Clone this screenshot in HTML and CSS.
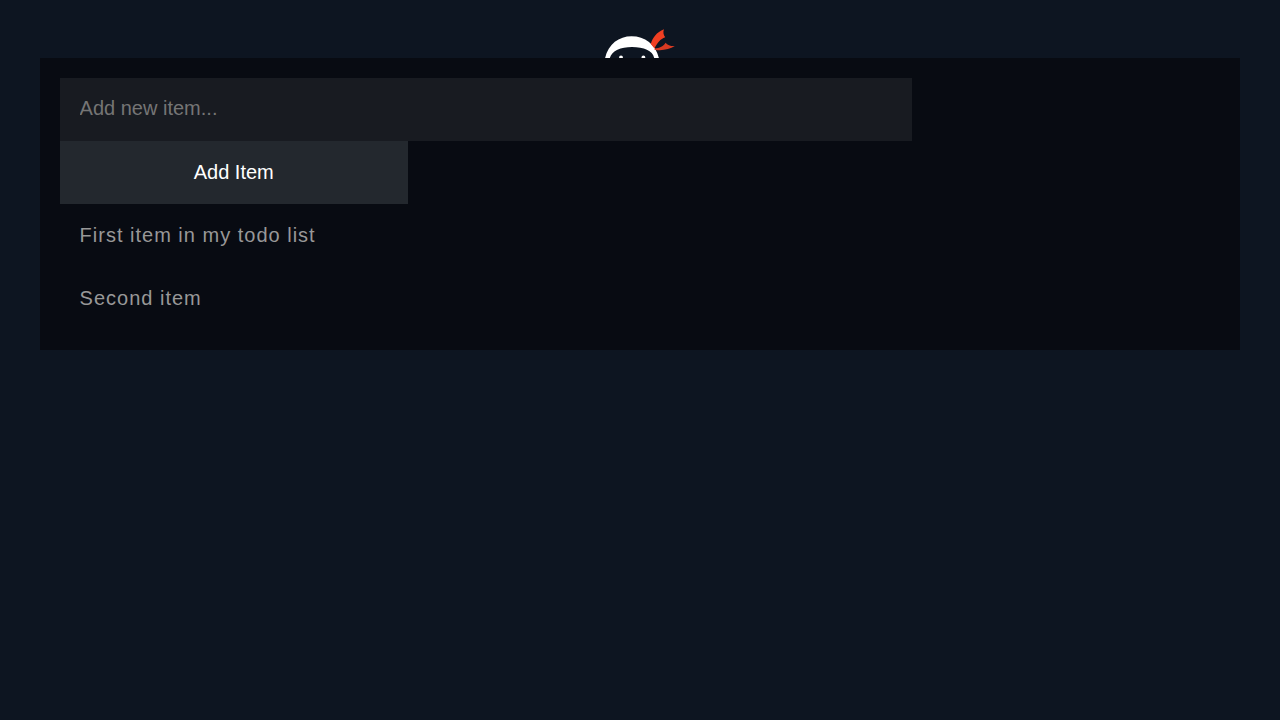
FILE: index.html
```html
<!DOCTYPE html>
<html lang="en">
<head>
<meta charset="utf-8">
<title>Todo List</title>
<link rel="stylesheet" href="styles.css">
</head>
<body>
<header class="logo">
<svg class="logo-mark" viewBox="600 8 80 50" width="80" height="50" aria-hidden="true">
<path fill="#fff" d="M605 58.5C608 44 619 36.2 631.5 36.2C645 36.2 656 44.5 659 58.5H654.3C653 50.5 644 47 632 47C620.500 47 611.500 51 609.700 58.5Z"/>
<circle cx="621" cy="57.300" r="1.900" fill="#fff"/>
<circle cx="643.400" cy="57.300" r="1.900" fill="#fff"/>
<path fill="#f03f22" d="M650.800 44C652.500 38 656.500 32 664 29.200C662.800 32 663.500 34.800 665.200 37.200C660.500 38.800 657 43 654.500 48.500Z"/>
<path fill="#d83a22" d="M654.500 48.700C659.500 48 663.800 46.300 665.500 42.800C667.800 45.300 670.500 46.300 674.800 46.100C669.500 49.800 661 51 654.500 49.700Z"/>
</svg>
</header>
<main class="todo">
<form class="todo-form">
<input class="todo-input" type="text" placeholder="Add new item...">
<button class="todo-button" type="button">Add Item</button>
</form>
<ul class="todo-list">
<li class="todo-item">First item in my todo list</li>
<li class="todo-item">Second item</li>
</ul>
</main>
</body>
</html>
```
FILE: styles.css
```css
body {
  margin: 8px;
  background: #0d1521;
  color: #989898;
  font-family: "Liberation Sans", Arial, sans-serif;
  font-size: 20px;
}

.logo {
  display: flex;
  justify-content: center;
  height: 50px;
}

.logo-mark {
  display: block;
}

.todo {
  box-sizing: border-box;
  width: 95%;
  margin: 0 auto;
  padding: 20px;
  background: #080b12;
}

.todo-form {
  display: flex;
  flex-direction: column;
  align-items: flex-start;
}

.todo-input,
.todo-button {
  height: 63px;
  margin: 0;
  border: 0;
  border-radius: 0;
  color: #fff;
  font: inherit;
}

.todo-input {
  box-sizing: content-box;
  width: 70%;
  height: 25px;
  padding: 18px 20px 20px;
  background: #181b21;
}

.todo-input::placeholder {
  color: #757575;
}

.todo-button {
  box-sizing: border-box;
  width: 30%;
  padding: 20px;
  background: #23282e;
}

.todo-list {
  margin: 0;
  padding: 0;
  list-style: none;
}

.todo-item {
  padding: 20px;
  line-height: 23px;
  letter-spacing: 1px;
}
```
